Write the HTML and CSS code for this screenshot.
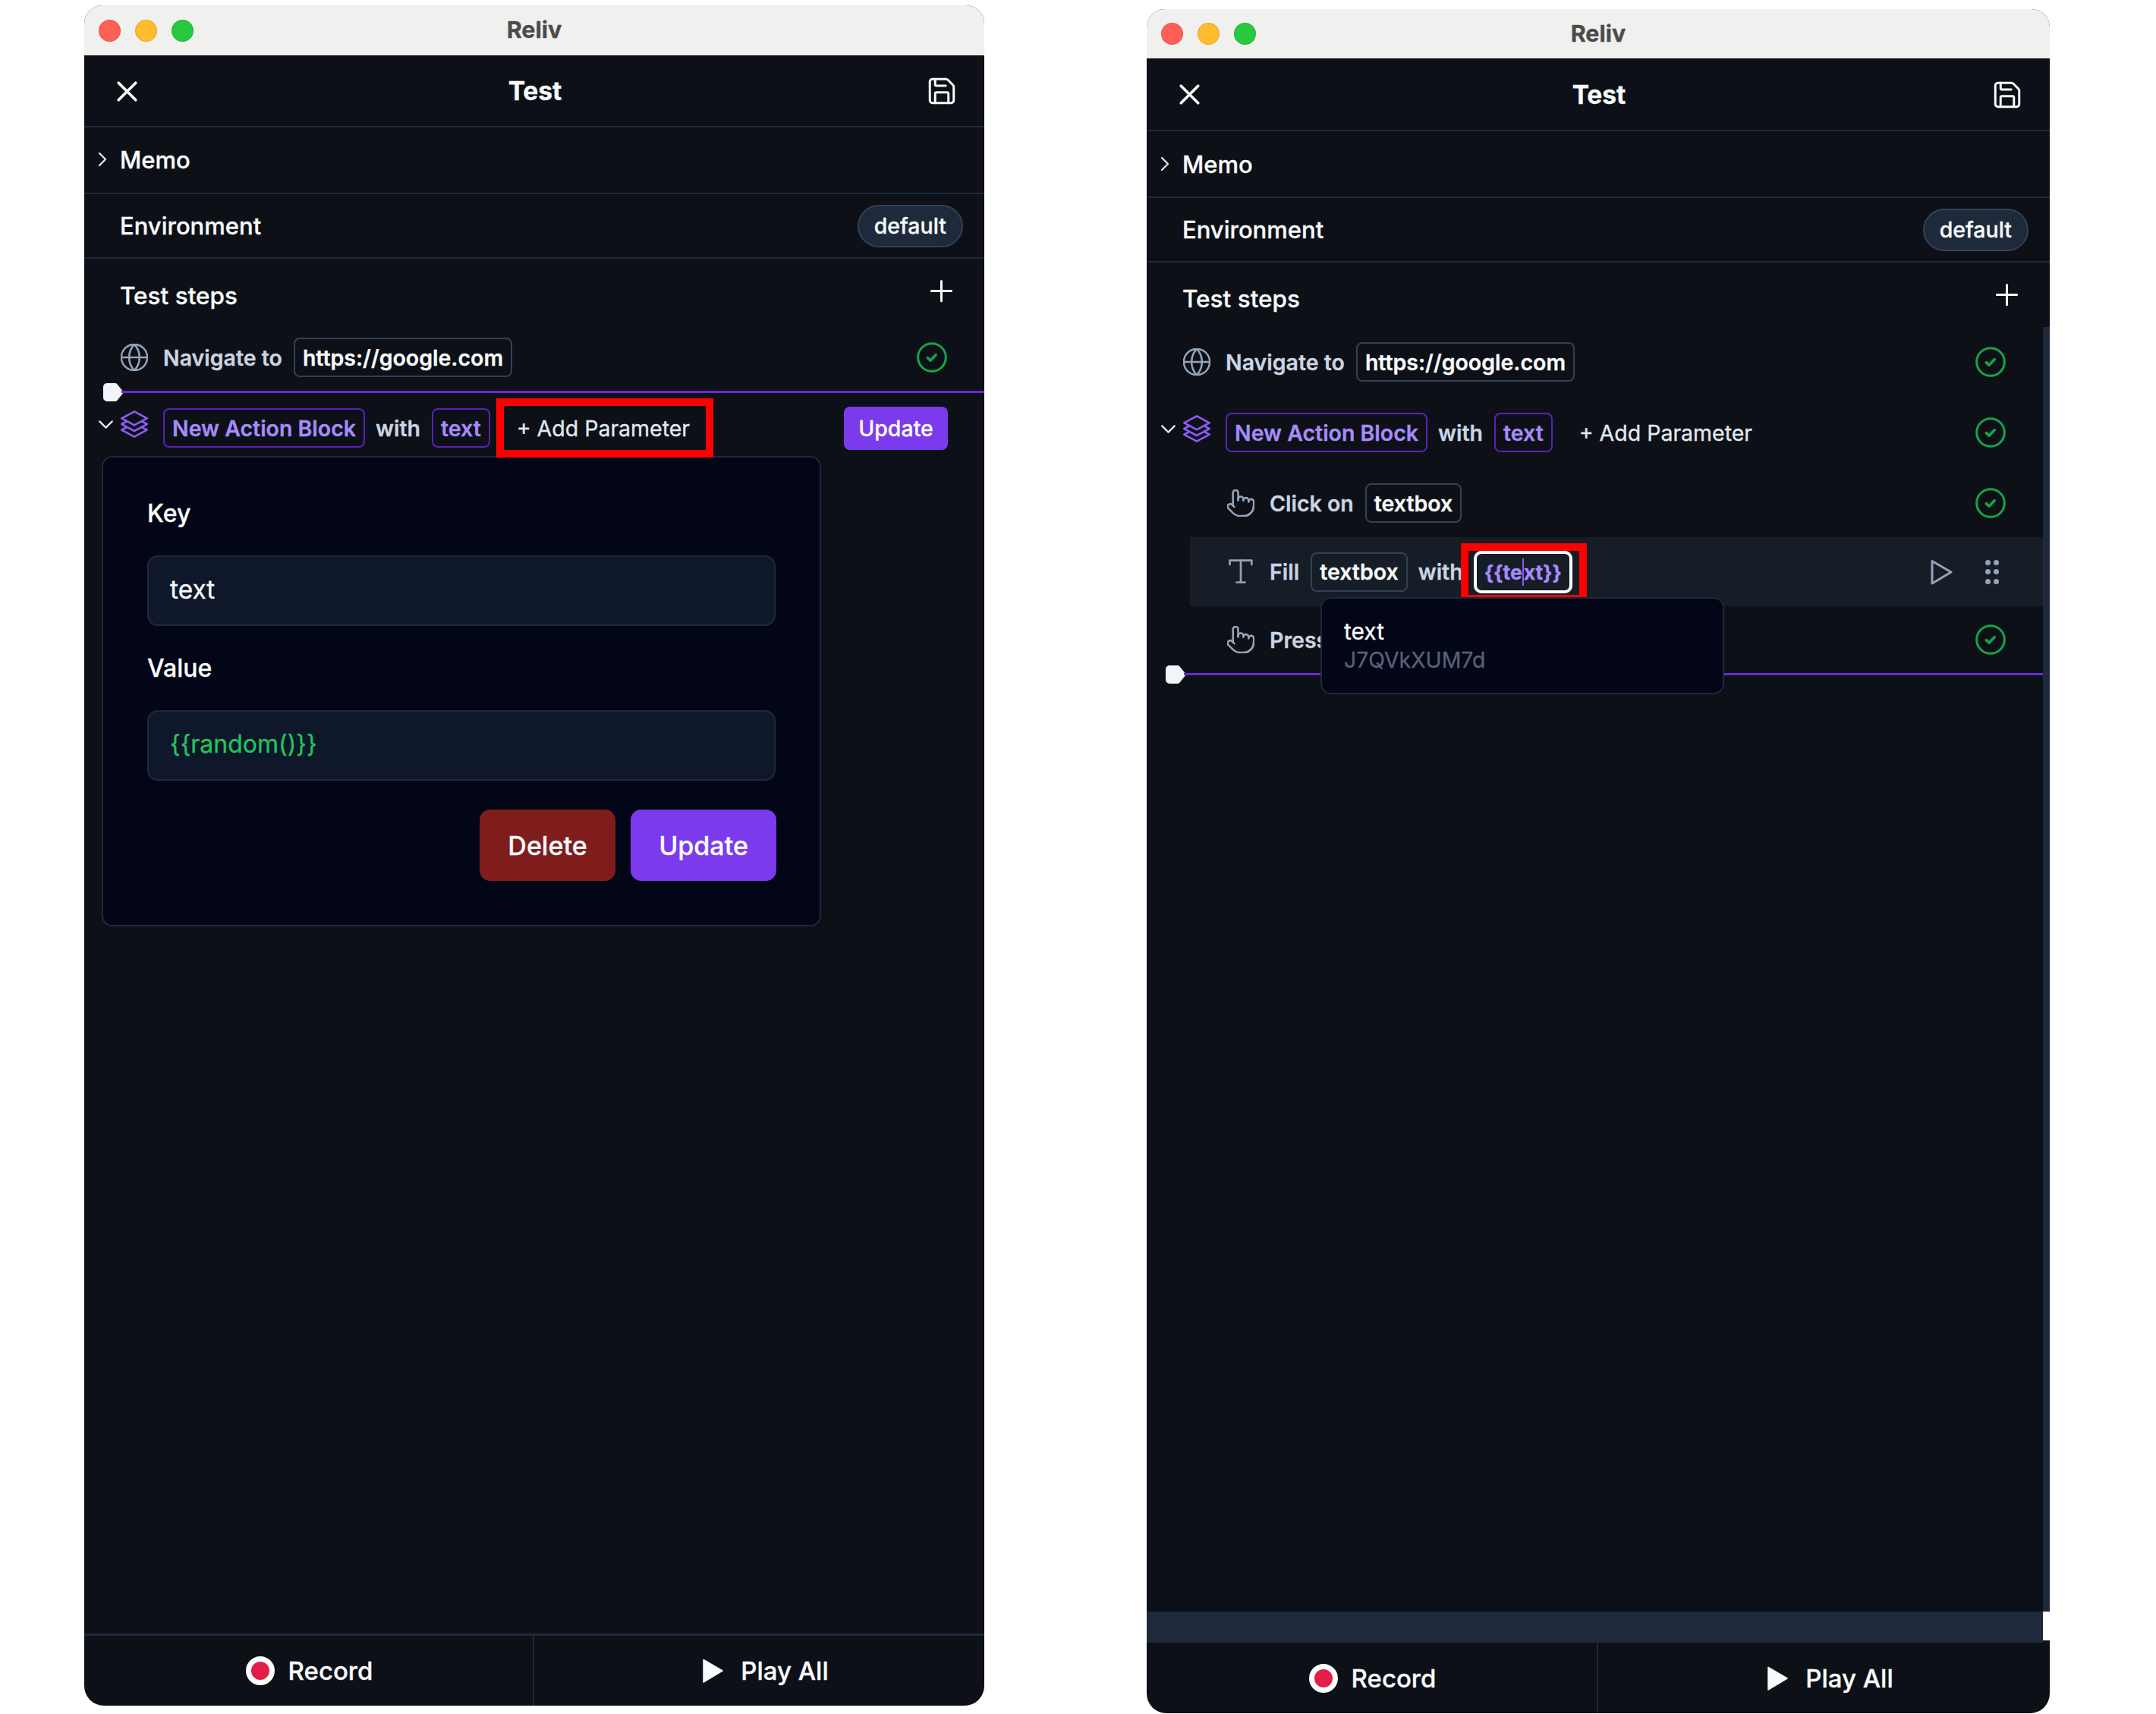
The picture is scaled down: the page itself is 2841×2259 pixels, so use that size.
FILE: index.html
```html
<!DOCTYPE html>
<html lang="en">
<head>
<meta charset="utf-8">
<title>Reliv</title>
<link rel="stylesheet" href="styles.css">
</head>
<body>
<svg class="sprite" xmlns="http://www.w3.org/2000/svg">
  <symbol id="i-x" viewBox="0 0 24 24"><path d="M18 6 6 18M6 6l12 12"/></symbol>
  <symbol id="i-save" viewBox="0 0 24 24"><path d="M15.2 3a2 2 0 0 1 1.4.6l3.8 3.8a2 2 0 0 1 .6 1.4V19a2 2 0 0 1-2 2H5a2 2 0 0 1-2-2V5a2 2 0 0 1 2-2z"/><path d="M17 21v-7a1 1 0 0 0-1-1H8a1 1 0 0 0-1 1v7"/><path d="M7 3v4a1 1 0 0 0 1 1h7"/></symbol>
  <symbol id="i-right" viewBox="0 0 24 24"><path d="m9 18 6-6-6-6"/></symbol>
  <symbol id="i-down" viewBox="0 0 24 24"><path d="m6 9 6 6 6-6"/></symbol>
  <symbol id="i-plus" viewBox="0 0 24 24"><path d="M5 12h14M12 5v14"/></symbol>
  <symbol id="i-globe" viewBox="1.5 1.5 21 21"><circle cx="12" cy="12" r="10"/><path d="M12 2a14.5 14.5 0 0 0 0 20 14.5 14.5 0 0 0 0-20"/><path d="M2 12h20"/></symbol>
  <symbol id="i-stack" viewBox="1.5 1.5 21 21"><path d="M6.429 9.75 2.25 12l4.179 2.25m0-4.5 5.571 3 5.571-3m-11.142 0L2.25 7.5 12 2.25l9.75 5.25-4.179 2.25m0 0L21.75 12l-4.179 2.25m0 0 4.179 2.25L12 21.75 2.25 16.5l4.179-2.25m11.142 0-5.571 3-5.571-3"/></symbol>
  <symbol id="i-check" viewBox="0 0 24 24"><circle class="check-ring" cx="12" cy="12" r="11"/><path class="check-tick" d="m8.6 12.4 2.2 2.1 4.3-4.5"/></symbol>
  <symbol id="i-hand" viewBox="1.5 1.5 21 21"><path d="M22 14a8 8 0 0 1-8 8"/><path d="M18 11v-1a2 2 0 0 0-2-2 2 2 0 0 0-2 2"/><path d="M14 10V9a2 2 0 0 0-2-2 2 2 0 0 0-2 2v1"/><path d="M10 9.5V4a2 2 0 0 0-2-2 2 2 0 0 0-2 2v10"/><path d="M18 11a2 2 0 1 1 4 0v3a8 8 0 0 1-8 8h-2c-2.8 0-4.5-.86-5.99-2.34l-3.6-3.6a2 2 0 0 1 2.83-2.82L7 15"/></symbol>
  <symbol id="i-type" viewBox="2 2.5 20 20"><path d="M4 7V4h16v3"/><path d="M9 20h6"/><path d="M12 4v16"/></symbol>
  <symbol id="i-play" viewBox="0 0 36 36"><path d="M6 3.500 31 18 6 33z"/></symbol>
  <symbol id="i-handle" viewBox="0 0 28 24"><path d="M5 0h11a3 3 0 0 1 2.200 1L27 12l-8.800 11a3 3 0 0 1-2.200 1H5a5 5 0 0 1-5-5V5a5 5 0 0 1 5-5z"/></symbol>
</svg>

<main class="desktop">

  <section class="window window-a">
    <div class="titlebar"><div class="lights"><span class="light red"></span><span class="light amber"></span><span class="light green"></span></div><div class="win-name">Reliv</div></div>
    <header class="head">
      <svg class="ico-x"><use href="#i-x"/></svg>
      <h1 class="test-name">Test</h1>
      <svg class="ico-save"><use href="#i-save"/></svg>
    </header>
    <div class="bar memo"><svg class="ico-right"><use href="#i-right"/></svg><span>Memo</span></div>
    <div class="bar env"><span>Environment</span><span class="pill">default</span></div>
    <div class="steps-head"><span>Test steps</span><svg class="ico-plus"><use href="#i-plus"/></svg></div>

    <div class="row">
      <svg class="ico grey"><use href="#i-globe"/></svg>
      <span class="word">Navigate to</span><span class="chip">https://google.com</span>
      <svg class="ico-check"><use href="#i-check"/></svg>
    </div>
    <div class="insert"><svg class="handle"><use href="#i-handle"/></svg></div>
    <div class="row row-block">
      <svg class="ico-down"><use href="#i-down"/></svg>
      <svg class="ico violet lift"><use href="#i-stack"/></svg>
      <span class="chip chip-violet">New Action Block</span><span class="word">with</span><span class="chip chip-violet">text</span>
      <span class="add-param marked">+ Add Parameter</span>
      <button class="btn-small">Update</button>
    </div>

    <form class="panel">
      <label class="field-label">Key</label>
      <div class="input">text</div>
      <label class="field-label">Value</label>
      <div class="input input-value">{{random()}}</div>
      <div class="actions"><span class="btn btn-danger">Delete</span><span class="btn btn-primary">Update</span></div>
    </form>

    <div class="grow"></div>
    <footer class="foot">
      <div class="foot-cell"><span class="rec"></span><span>Record</span></div>
      <div class="foot-cell"><svg class="ico-playall"><use href="#i-play"/></svg><span>Play All</span></div>
    </footer>
  </section>

  <section class="window window-b">
    <div class="titlebar"><div class="lights"><span class="light red"></span><span class="light amber"></span><span class="light green"></span></div><div class="win-name">Reliv</div></div>
    <header class="head">
      <svg class="ico-x"><use href="#i-x"/></svg>
      <h1 class="test-name">Test</h1>
      <svg class="ico-save"><use href="#i-save"/></svg>
    </header>
    <div class="bar memo"><svg class="ico-right"><use href="#i-right"/></svg><span>Memo</span></div>
    <div class="bar env"><span>Environment</span><span class="pill">default</span></div>
    <div class="steps-head"><span>Test steps</span><svg class="ico-plus"><use href="#i-plus"/></svg></div>

    <div class="scroll">
      <div class="scroll-body">
        <div class="row">
          <svg class="ico grey"><use href="#i-globe"/></svg>
          <span class="word">Navigate to</span><span class="chip">https://google.com</span>
          <svg class="ico-check"><use href="#i-check"/></svg>
        </div>
        <div class="row row-block">
          <svg class="ico-down"><use href="#i-down"/></svg>
          <svg class="ico violet lift"><use href="#i-stack"/></svg>
          <span class="chip chip-violet">New Action Block</span><span class="word">with</span><span class="chip chip-violet">text</span>
          <span class="add-param">+ Add Parameter</span>
          <svg class="ico-check"><use href="#i-check"/></svg>
        </div>
        <div class="row row-sub">
          <svg class="ico grey"><use href="#i-hand"/></svg>
          <span class="word">Click on</span><span class="chip">textbox</span>
          <svg class="ico-check"><use href="#i-check"/></svg>
        </div>
        <div class="row row-sub row-active">
          <svg class="ico grey"><use href="#i-type"/></svg>
          <span class="word">Fill</span><span class="chip">textbox</span><span class="word word-tight">with</span>
          <span class="chip chip-edit marked-edit">{{te<i class="caret"></i>xt}}</span>
          <svg class="ico-run"><use href="#i-play"/></svg>
          <span class="grip"><i></i><i></i><i></i><i></i><i></i><i></i></span>
          <div class="popup"><div class="popup-key">text</div><div class="popup-value">J7QVkXUM7d</div></div>
        </div>
        <div class="row row-sub row-press">
          <svg class="ico grey"><use href="#i-hand"/></svg>
          <span class="word">Press</span>
          <svg class="ico-check"><use href="#i-check"/></svg>
        </div>
        <div class="insert"><svg class="handle"><use href="#i-handle"/></svg></div>
      </div>
      <div class="vbar"></div>
    </div>
    <div class="hbar"><div class="hbar-track"></div><div class="hbar-corner"></div></div>
    <footer class="foot">
      <div class="foot-cell"><span class="rec"></span><span>Record</span></div>
      <div class="foot-cell"><svg class="ico-playall"><use href="#i-play"/></svg><span>Play All</span></div>
    </footer>
  </section>

</main>
</body>
</html>
```

FILE: styles.css
```css
* { box-sizing: border-box; }
html, body { margin: 0; background: #fff; }
body { font-family: Inter, "Liberation Sans", sans-serif; color: #f8fafc; width: 2841px; height: 2259px; overflow: hidden; -webkit-text-stroke: .3px currentColor; }
.sprite { display: none; }
svg { fill: none; stroke: currentColor; stroke-linecap: round; stroke-linejoin: round; flex: none; overflow: visible; }

.desktop { display: flex; align-items: flex-start; gap: 214px; padding-left: 111px; }

.window { display: flex; flex-direction: column; background: #0d1117; border-radius: 24px 24px 26px 26px; overflow: hidden; }
.window-a { width: 1186px; height: 2241px; margin-top: 7px; }
.window-b { width: 1190px; height: 2246px; margin-top: 12px; }

.titlebar { height: 67px; flex: none; position: relative; display: flex; align-items: center; justify-content: center; background: #f0f0ee; border-bottom: 1px solid #000; }
.window-b .titlebar { height: 66px; }
.lights { position: absolute; left: 19px; top: 19px; display: flex; gap: 19px; }
.window-b .lights { top: 18px; }
.light { width: 29px; height: 29px; border-radius: 50%; border: 1px solid rgba(0,0,0,.1); }
.red { background: #ff5f57; }
.amber { background: #febc2e; }
.green { background: #28c840; }
.win-name { font-size: 30.500px; font-weight: 700; color: #4b4b4b; margin-top: -3px; }

.head { height: 94px; flex: none; display: flex; align-items: center; justify-content: space-between; padding: 0 35px 0 34px; border-bottom: 2px solid #1e293b; }
.window-b .head { height: 95px; }
.test-name { margin: 0; font-size: 33.500px; font-weight: 700; color: #f8fafc; }
.ico-x { width: 45px; height: 45px; stroke-width: 2; color: #f8fafc; }
.ico-save { width: 42px; height: 42px; stroke-width: 1.7; color: #f8fafc; }

.bar { flex: none; display: flex; align-items: center; font-size: 31px; font-weight: 500; border-bottom: 2px solid #1e293b; }
.memo { height: 88px; padding-left: 8px; }
.window-a .memo { padding-bottom: 2px; }
.env { height: 85px; padding: 0 28px 0 47px; justify-content: space-between; }
.ico-right { width: 32px; height: 32px; stroke-width: 1.7; margin-right: 7px; color: #e2e8f0; }
.pill { height: 56px; padding: 0 20px; display: flex; align-items: center; border-radius: 28px; background: #1e293b; border: 2px solid #334155; font-size: 28.500px; }

.steps-head { flex: none; height: 96px; padding: 0 34px 0 47px; display: flex; align-items: center; justify-content: space-between; font-size: 31.500px; font-weight: 500; }
.window-b .steps-head { height: 85px; padding-top: 10px; }
.ico-plus { width: 45px; height: 45px; stroke-width: 1.6; margin-bottom: 12px; }
.window-b .ico-plus { margin-bottom: 10px; }

.scroll { flex: 1; display: flex; min-height: 0; }
.scroll-body { flex: 1; min-width: 0; padding-top: 12px; }
.vbar { width: 9px; background: #1e293b; flex: none; }
.hbar { flex: none; height: 41px; display: flex; align-items: flex-start; }
.hbar-track { flex: 1; height: 41px; background: #1e293b; }
.hbar-corner { width: 9px; height: 38px; background: #fff; }

.row { height: 68px; flex: none; display: flex; align-items: center; padding: 0 49px 0 48px; font-size: 28.500px; font-weight: 600; }
.scroll-body .row + .row { margin-top: 25px; }
.scroll-body .row-sub + .row-active { margin-top: 11px; }
.scroll-body .row-active + .row-press { margin-top: 10px; }
.row-block { padding-left: 12px; }
.window-a .row-block { padding-bottom: 2px; }
.row-sub { padding-left: 106px; }
.row-active { height: 91px; margin-left: 57px; padding-left: 49px; background: #161d27; position: relative; }
.ico { width: 36px; height: 36px; margin-right: 20px; stroke-width: 1.5; }
.grey { color: #94a3b8; }
.violet { color: #8b5cf6; }
.lift { margin-bottom: 10px; }
.ico-down { width: 33px; height: 33px; stroke-width: 1.7; margin: 0 3px 10px 0; color: #e2e8f0; }
.word { color: #cbd5e1; margin-right: 15px; white-space: nowrap; }
.word-tight { margin-right: 14px; }
.chip { height: 52px; display: flex; align-items: center; padding: 0 10px; margin-right: 14px; border: 2px solid #334155; border-radius: 8px; color: #f8fafc; white-space: nowrap; }
.chip-violet { border-color: #5b21b6; color: #a78bfa; }
.ico-check { width: 40px; height: 40px; margin-left: auto; }
.check-ring { stroke: #16a34a; stroke-width: 1.8; }
.check-tick { stroke: #16a34a; stroke-width: 2.2; }
.add-param { position: relative; margin-left: 21px; font-weight: 400; color: #e2e8f0; white-space: nowrap; }
.marked::after { content: ""; position: absolute; left: -27px; right: -31px; top: calc(50% - 39px); bottom: calc(50% - 39px); border: 10px solid #fe0000; }
.btn-small { margin-left: auto; margin-right: -1px; height: 57px; width: 137px; padding: 0; border: 0; border-radius: 8px; background: #7c3aed; color: #f8fafc; font: 500 28.500px Inter, sans-serif; }

.chip-edit { position: relative; height: 56px; padding: 0 10px; margin-right: 0; border: 4px solid #fff; border-radius: 10px; color: #a78bfa; font-size: 26.500px; font-weight: 700; }
.marked-edit::after { content: ""; position: absolute; left: -21px; right: -23px; top: -14px; bottom: -16px; border: 10px solid #fe0000; }
.caret { display: inline-block; width: 0; height: 36px; border-left: 2px solid #8b5cf6; }
.ico-run { width: 36px; height: 36px; margin-left: auto; color: #94a3b8; stroke-width: 3; margin-right: 31px; }
.grip { width: 36px; padding: 0 9px; display: grid; grid-template-columns: 7px 7px; gap: 5.500px 3.500px; justify-content: center; }
.grip i { width: 7px; height: 7px; border-radius: 50%; background: #94a3b8; }
.popup { position: absolute; z-index: 2; left: 172px; top: 79px; width: 532px; height: 128px; padding: 24px 29px; background: #020617; border: 2px solid #1e293b; border-radius: 14px; font-size: 30px; font-weight: 400; }
.popup-key { color: #f8fafc; line-height: 38px; }
.popup-value { color: #566378; line-height: 38px; font-size: 28.400px; }

.insert { height: 23px; margin-bottom: 3px; position: relative; display: flex; align-items: center; padding-left: 25px; }
.insert::after { content: ""; flex: 1; height: 3px; background: #6d28d9; margin-left: -4px; }
.handle { width: 28px; height: 24px; fill: #f1f5f9; stroke: none; }

.panel { width: 948px; height: 620px; margin: 2px 0 0 23px; padding: 55px 58px 0; background: #020617; border: 2px solid #1e293b; border-radius: 14px; display: flex; flex-direction: column; }
.field-label { height: 38px; line-height: 38px; font-size: 32px; font-weight: 500; margin-bottom: 36px; }
.input { height: 93px; display: flex; align-items: center; padding: 0 0 4px 28px; margin-bottom: 37px; border: 2px solid #1e293b; border-radius: 14px; background: #0f172a; font-size: 33.500px; }
.input-value { color: #22c55e; margin-bottom: 38px; font-size: 32px; }
.actions { display: flex; justify-content: flex-end; gap: 20px; margin-right: -1px; }
.btn { height: 94px; display: flex; align-items: center; justify-content: center; border-radius: 14px; font-size: 34px; font-weight: 500; }
.btn-danger { width: 179px; background: #7f1d1d; }
.btn-primary { width: 192px; background: #7c3aed; }

.grow { flex: 1; }
.foot { flex: none; height: 95px; display: grid; grid-template-columns: 1fr 1fr; border-top: 3px solid #1e293b; }
.window-b .foot { height: 93px; border-top: 0; }
.foot-cell { display: flex; align-items: center; justify-content: center; gap: 18px; font-size: 33px; font-weight: 500; }
.foot-cell + .foot-cell { border-left: 2px solid #1e293b; padding-left: 12px; margin-left: -2px; gap: 19px; }
.rec { width: 38px; height: 38px; border-radius: 50%; background: #e11d48; border: 7px solid #fff; }
.ico-playall { width: 36px; height: 36px; fill: #f8fafc; stroke: #f8fafc; stroke-width: 1.5; }
```
